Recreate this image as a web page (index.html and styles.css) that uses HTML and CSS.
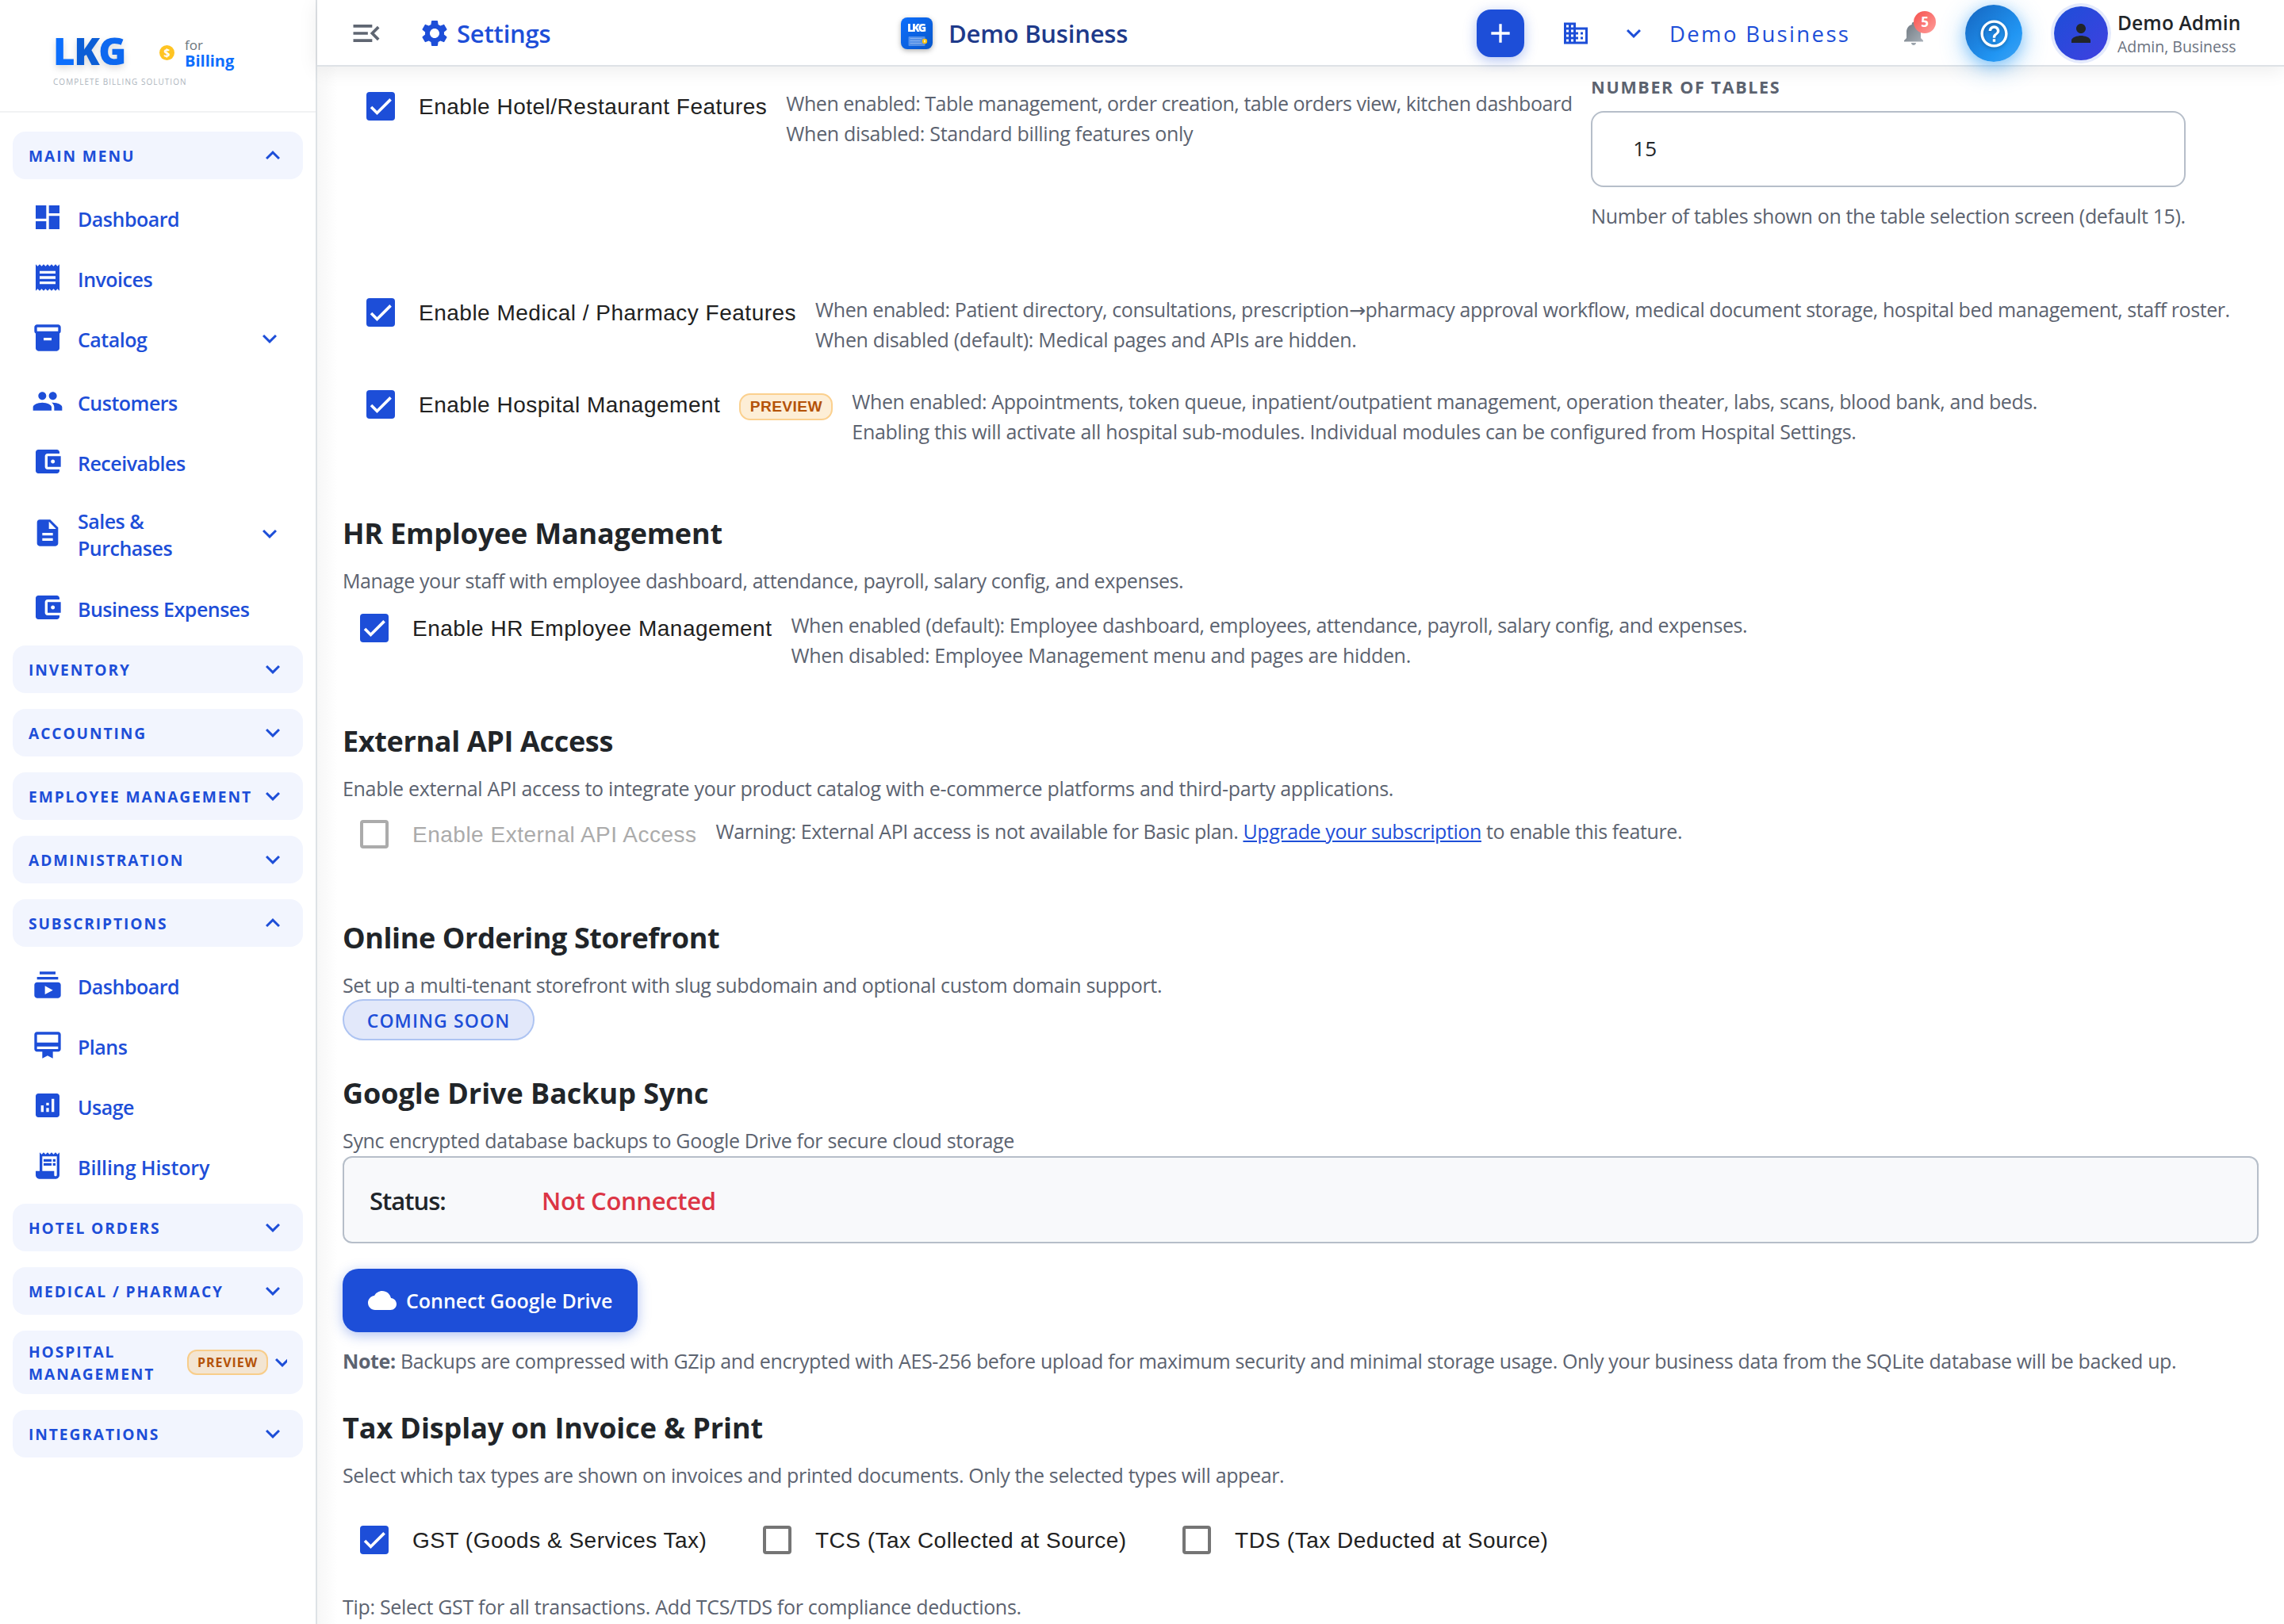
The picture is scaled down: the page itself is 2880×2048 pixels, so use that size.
FILE: index.html
```html
<!DOCTYPE html>
<html lang="en">
<head>
<meta charset="utf-8">
<title>Settings - Demo Business</title>
<link rel="stylesheet" href="styles.css">
</head>
<body>
<svg class="defs" aria-hidden="true">
  <defs>
    <linearGradient id="bellGrad" x1="0" y1="0" x2="1" y2="1"><stop offset="0" stop-color="#6c757d"/><stop offset="1" stop-color="#adb5bd"/></linearGradient>
    <linearGradient id="logoGrad" x1="0" y1="0" x2="1" y2="1"><stop offset="0" stop-color="#0d6efd"/><stop offset="1" stop-color="#0a58ca"/></linearGradient>
    <symbol id="down" viewBox="0 0 24 24"><path d="M16.59 8.59 12 13.17 7.41 8.59 6 10l6 6 6-6z"/></symbol>
    <symbol id="up" viewBox="0 0 24 24"><path d="m12 8-6 6 1.41 1.41L12 10.83l4.59 4.58L18 14z"/></symbol>
    <symbol id="wallet" viewBox="0 0 24 24"><path d="M21 18v1c0 1.1-.9 2-2 2H5c-1.11 0-2-.9-2-2V5c0-1.1.89-2 2-2h14c1.1 0 2 .9 2 2v1h-9c-1.11 0-2 .9-2 2v8c0 1.1.89 2 2 2h9zm-9-2h10V8H12v8zm4-2.500c-.83 0-1.500-.67-1.500-1.500s.67-1.500 1.500-1.500 1.500.67 1.500 1.500-.67 1.500-1.500 1.500z"/></symbol>
    <symbol id="check" viewBox="0 0 24 24"><path d="M1.730 12.910 8.100 19.280 22.790 4.590" fill="none" stroke="#fff" stroke-width="3.120"/></symbol>
  </defs>
</svg>
<div class="app">
  <aside class="sidebar">
    <div class="brand">
      <div class="brand-main">
        <span class="brand-name"><span class="bn-l">L</span><span class="bn-k">K</span><span class="bn-g">G</span></span>
        <span class="coin">$</span>
        <span class="brand-for"><span class="bf-small">for</span><span class="bf-big">Billing</span></span>
      </div>
      <div class="brand-tag">COMPLETE BILLING SOLUTION</div>
    </div>
    <nav class="menu">
      <div class="group"><span>MAIN MENU</span><svg class="chev"><use href="#up"/></svg></div>
      <ul class="items">
        <li class="item"><svg class="ico" viewBox="0 0 24 24"><path d="M3 13h8V3H3v10zm0 8h8v-6H3v6zm10 0h8V11h-8v10zm0-18v6h8V3h-8z"/></svg><span>Dashboard</span></li>
        <li class="item"><svg class="ico" viewBox="0 0 24 24"><path d="M18 17H6v-2h12v2zm0-4H6v-2h12v2zm0-4H6V7h12v2zM3 22l1.500-1.500L6 22l1.500-1.500L9 22l1.500-1.500L12 22l1.500-1.500L15 22l1.500-1.500L18 22l1.500-1.500L21 22V2l-1.500 1.500L18 2l-1.500 1.500L15 2l-1.500 1.500L12 2l-1.500 1.500L9 2 7.500 3.500 6 2 4.500 3.500 3 2v20z"/></svg><span>Invoices</span></li>
        <li class="item parent"><svg class="ico" viewBox="0 0 24 24"><path d="M20 2H4c-1 0-2 .9-2 2v3.010c0 .72.43 1.340 1 1.690V20c0 1.100 1.100 2 2 2h14c.9 0 2-.9 2-2V8.700c.57-.35 1-.97 1-1.690V4c0-1.100-1-2-2-2zm-5 12H9v-2h6v2zm5-7H4V4h16v3z"/></svg><span>Catalog</span><svg class="chev"><use href="#down"/></svg></li>
        <li class="item"><svg class="ico" viewBox="0 0 24 24"><path d="M16 11c1.660 0 2.990-1.340 2.990-3S17.660 5 16 5s-3 1.340-3 3 1.340 3 3 3zm-8 0c1.660 0 2.990-1.340 2.990-3S9.660 5 8 5 5 6.340 5 8s1.340 3 3 3zm0 2c-2.330 0-7 1.170-7 3.500V19h14v-2.500c0-2.330-4.670-3.500-7-3.500zm8 0c-.29 0-.62.020-.97.050 1.160.84 1.970 1.970 1.970 3.450V19h6v-2.500c0-2.330-4.670-3.500-7-3.500z"/></svg><span>Customers</span></li>
        <li class="item"><svg class="ico"><use href="#wallet"/></svg><span>Receivables</span></li>
        <li class="item parent tall"><svg class="ico" viewBox="0 0 24 24"><path d="M14 2H6c-1.100 0-1.990.9-1.990 2L4 20c0 1.100.89 2 1.990 2H18c1.100 0 2-.9 2-2V8l-6-6zm2 16H8v-2h8v2zm0-4H8v-2h8v2zm-3-5V3.500L18.500 9H13z"/></svg><span>Sales &amp;<br>Purchases</span><svg class="chev"><use href="#down"/></svg></li>
        <li class="item"><svg class="ico"><use href="#wallet"/></svg><span>Business Expenses</span></li>
      </ul>
      <div class="group"><span>INVENTORY</span><svg class="chev"><use href="#down"/></svg></div>
      <div class="group"><span>ACCOUNTING</span><svg class="chev"><use href="#down"/></svg></div>
      <div class="group"><span>EMPLOYEE MANAGEMENT</span><svg class="chev"><use href="#down"/></svg></div>
      <div class="group"><span>ADMINISTRATION</span><svg class="chev"><use href="#down"/></svg></div>
      <div class="group"><span>SUBSCRIPTIONS</span><svg class="chev"><use href="#up"/></svg></div>
      <ul class="items">
        <li class="item"><svg class="ico" viewBox="0 0 24 24"><path d="M20 8H4V6h16v2zm-2-6H6v2h12V2zm4 10v8c0 1.100-.9 2-2 2H4c-1.100 0-2-.9-2-2v-8c0-1.100.9-2 2-2h16c1.100 0 2 .9 2 2zm-6 4-6-3.270v6.530L16 16z"/></svg><span>Dashboard</span></li>
        <li class="item"><svg class="ico" viewBox="0 0 24 24"><path d="M20 2H4c-1.110 0-2 .89-2 2v11c0 1.110.89 2 2 2h4v5l4-2 4 2v-5h4c1.110 0 2-.89 2-2V4c0-1.110-.89-2-2-2zm0 13H4v-2h16v2zm0-5H4V4h16v6z"/></svg><span>Plans</span></li>
        <li class="item"><svg class="ico" viewBox="0 0 24 24"><path d="M19 3H5c-1.100 0-2 .9-2 2v14c0 1.100.9 2 2 2h14c1.100 0 2-.9 2-2V5c0-1.100-.9-2-2-2zM9 17H7v-5h2v5zm4 0h-2v-3h2v3zm0-5h-2v-2h2v2zm4 5h-2V7h2v10z"/></svg><span>Usage</span></li>
        <li class="item history"><svg class="ico" viewBox="0 0 24 24"><path d="M19.500 3.500 18 2l-1.500 1.500L15 2l-1.500 1.500L12 2l-1.500 1.500L9 2 7.500 3.500 6 2v14H3v3c0 1.660 1.340 3 3 3h12c1.660 0 3-1.340 3-3V2l-1.500 1.500zM19 19c0 .55-.45 1-1 1s-1-.45-1-1v-3H8V5h11v14z"/><path d="M9 7h6v2H9zM16 7h2v2h-2zM9 10h6v2H9zM16 10h2v2h-2z"/></svg><span>Billing History</span></li>
      </ul>
      <div class="group"><span>HOTEL ORDERS</span><svg class="chev"><use href="#down"/></svg></div>
      <div class="group"><span>MEDICAL / PHARMACY</span><svg class="chev"><use href="#down"/></svg></div>
      <div class="group double"><span>HOSPITAL<br>MANAGEMENT</span><em class="preview-tag">PREVIEW</em><svg class="chev clipped" viewBox="1.330 0 14.670 24"><path d="M16.590 8.590 12 13.170 7.410 8.590 6 10l6 6 6-6z"/></svg></div>
      <div class="group"><span>INTEGRATIONS</span><svg class="chev"><use href="#down"/></svg></div>
    </nav>
  </aside>

  <div class="page">
    <header class="topbar">
      <div class="top-left">
        <svg class="menu-open" viewBox="0 0 24 24"><path d="M3 18h13v-2H3v2zm0-5h10v-2H3v2zm0-7v2h13V6H3zm18 9.590L17.420 12 21 8.410 19.590 7l-5 5 5 5L21 15.590z"/></svg>
        <svg class="gear" viewBox="0 0 24 24"><path d="M19.140 12.940c.04-.3.060-.61.060-.94 0-.32-.02-.64-.07-.94l2.030-1.580c.18-.14.23-.41.12-.61l-1.920-3.320c-.12-.22-.37-.29-.59-.22l-2.390.96c-.5-.38-1.030-.7-1.620-.94l-.36-2.540c-.04-.24-.24-.41-.48-.41h-3.840c-.24 0-.43.17-.47.41l-.36 2.540c-.59.24-1.130.57-1.620.94l-2.390-.96c-.22-.08-.47 0-.59.22L2.740 8.870c-.12.21-.08.47.12.61l2.030 1.580c-.05.3-.09.63-.09.94s.02.64.07.94l-2.030 1.580c-.18.14-.23.41-.12.61l1.920 3.320c.12.22.37.29.59.22l2.390-.96c.5.38 1.030.7 1.620.94l.36 2.540c.05.24.24.41.48.41h3.840c.24 0 .44-.17.47-.41l.36-2.540c.59-.24 1.130-.56 1.620-.94l2.390.96c.22.08.47 0 .59-.22l1.920-3.320c.12-.22.07-.47-.12-.61l-2.010-1.580zM12 15.600c-1.980 0-3.600-1.620-3.600-3.600s1.620-3.600 3.600-3.600 3.600 1.620 3.600 3.600-1.620 3.600-3.600 3.600z"/></svg>
        <span class="title">Settings</span>
      </div>
      <div class="top-brand">
        <svg class="app-logo" viewBox="0 0 40 40"><rect width="40" height="40" rx="8" fill="url(#logoGrad)"/><text x="20" y="17.500" text-anchor="middle" textLength="24" class="app-logo-text">LKG</text><rect x="9.500" y="24" width="21" height="12" rx="1" fill="#fff" fill-opacity=".3"/><path d="M11.500 26.500h15M11.500 29.500h13M11.500 32.500h15" stroke="#fff" stroke-opacity=".3" stroke-width="1"/><circle cx="30" cy="30" r="3.200" fill="#ffc107"/><rect x="29.200" y="28.500" width="1.600" height="3" fill="#fff" fill-opacity=".8"/></svg>
        <span class="title dark">Demo Business</span>
      </div>
      <div class="top-right">
        <span class="add"><svg viewBox="0 0 24 24"><path d="M19 13h-6v6h-2v-6H5v-2h6V5h2v6h6v2z"/></svg></span>
        <svg class="building" viewBox="0 0 24 24"><path d="M12 7V3H2v18h20V7H12zM6 19H4v-2h2v2zm0-4H4v-2h2v2zm0-4H4V9h2v2zm0-4H4V5h2v2zm4 12H8v-2h2v2zm0-4H8v-2h2v2zm0-4H8V9h2v2zm0-4H8V5h2v2zm10 12h-8v-2h2v-2h-2v-2h2v-2h-2V9h8v10zm-2-8h-2v2h2v-2zm0 4h-2v2h2v-2z"/></svg>
        <svg class="chev top-chev"><use href="#down"/></svg>
        <span class="tenant">Demo Business</span>
        <span class="bell"><svg viewBox="0 0 24 24"><path fill="url(#bellGrad)" d="M12 22c1.100 0 2-.9 2-2h-4c0 1.100.89 2 2 2zm6-6v-5c0-3.070-1.640-5.640-4.500-6.320V4c0-.83-.67-1.500-1.500-1.500s-1.500.67-1.500 1.500v.68C7.630 5.360 6 7.920 6 11v5l-2 2v1h16v-1l-2-2z"/></svg><b class="count">5</b></span>
        <span class="help"><svg viewBox="0 0 24 24"><path d="M11 18h2v-2h-2v2zm1-16C6.480 2 2 6.480 2 12s4.480 10 10 10 10-4.480 10-10S17.520 2 12 2zm0 18c-4.410 0-8-3.590-8-8s3.590-8 8-8 8 3.590 8 8-3.590 8-8 8zm0-14c-2.210 0-4 1.790-4 4h2c0-1.100.9-2 2-2s2 .9 2 2c0 2-3 1.750-3 5h2c0-2.250 3-2.500 3-5 0-2.210-1.790-4-4-4z"/></svg></span>
        <span class="avatar"><svg viewBox="0 0 24 24"><path d="M12 12c2.210 0 4-1.790 4-4s-1.790-4-4-4-4 1.790-4 4 1.790 4 4 4zm0 2c-2.670 0-8 1.340-8 4v2h16v-2c0-2.660-5.330-4-8-4z"/></svg></span>
        <span class="who"><span class="who-name">Demo Admin</span><span class="who-role">Admin, Business</span></span>
      </div>
    </header>

    <main class="content">
      <div class="option indent first">
        <span class="box on"><svg><use href="#check"/></svg></span>
        <span class="label">Enable Hotel/Restaurant Features</span>
        <p class="desc">When enabled: Table management, order creation, table orders view, kitchen dashboard<br><span class="alt">When disabled: Standard billing features only</span></p>
        <div class="field">
          <span class="field-label">NUMBER OF TABLES</span>
          <div class="input">15</div>
          <span class="hint">Number of tables shown on the table selection screen (default 15).</span>
        </div>
      </div>
      <div class="option indent medical">
        <span class="box on"><svg><use href="#check"/></svg></span>
        <span class="label">Enable Medical / Pharmacy Features</span>
        <p class="desc">When enabled: Patient directory, consultations, prescription<span class="arrow">→</span>pharmacy approval workflow, medical document storage, hospital bed management, staff roster.<br><span class="alt">When disabled (default): Medical pages and APIs are hidden.</span></p>
      </div>
      <div class="option indent hospital">
        <span class="box on"><svg><use href="#check"/></svg></span>
        <span class="label">Enable Hospital Management</span>
        <em class="preview-badge">PREVIEW</em>
        <p class="desc">When enabled: Appointments, token queue, inpatient/outpatient management, operation theater, labs, scans, blood bank, and beds.<br><span class="alt">Enabling this will activate all hospital sub-modules. Individual modules can be configured from Hospital Settings.</span></p>
      </div>

      <section class="block hr">
        <h2>HR Employee Management</h2>
        <p class="lead">Manage your staff with employee dashboard, attendance, payroll, salary config, and expenses.</p>
        <div class="option">
          <span class="box on"><svg><use href="#check"/></svg></span>
          <span class="label">Enable HR Employee Management</span>
          <p class="desc">When enabled (default): Employee dashboard, employees, attendance, payroll, salary config, and expenses.<br><span class="alt">When disabled: Employee Management menu and pages are hidden.</span></p>
        </div>
      </section>

      <section class="block api">
        <h2>External API Access</h2>
        <p class="lead">Enable external API access to integrate your product catalog with e-commerce platforms and third-party applications.</p>
        <div class="option">
          <span class="box off disabled"></span>
          <span class="label disabled">Enable External API Access</span>
          <p class="desc">Warning: External API access is not available for Basic plan. <a>Upgrade your subscription</a> to enable this feature.</p>
        </div>
      </section>

      <section class="block store">
        <h2>Online Ordering Storefront</h2>
        <p class="lead">Set up a multi-tenant storefront with slug subdomain and optional custom domain support.</p>
        <span class="pill">COMING SOON</span>
      </section>

      <section class="block drive">
        <h2>Google Drive Backup Sync</h2>
        <p class="lead">Sync encrypted database backups to Google Drive for secure cloud storage</p>
        <div class="status"><span class="status-key">Status:</span><span class="status-value">Not Connected</span></div>
        <div class="connect"><svg viewBox="0 0 24 24"><path d="M19.350 10.040C18.670 6.590 15.640 4 12 4 9.110 4 6.600 5.640 5.350 8.040 2.340 8.360 0 10.910 0 14c0 3.310 2.690 6 6 6h13c2.760 0 5-2.240 5-5 0-2.640-2.050-4.780-4.650-4.960z"/></svg><span>Connect Google Drive</span></div>
        <p class="lead note"><b>Note:</b> Backups are compressed with GZip and encrypted with AES-256 before upload for maximum security and minimal storage usage. Only your business data from the SQLite database will be backed up.</p>
      </section>

      <section class="block tax">
        <h2>Tax Display on Invoice &amp; Print</h2>
        <p class="lead">Select which tax types are shown on invoices and printed documents. Only the selected types will appear.</p>
        <div class="tax-row">
          <div class="tax-opt"><span class="box on"><svg><use href="#check"/></svg></span><span class="label">GST (Goods &amp; Services Tax)</span></div>
          <div class="tax-opt"><span class="box off"></span><span class="label">TCS (Tax Collected at Source)</span></div>
          <div class="tax-opt"><span class="box off"></span><span class="label">TDS (Tax Deducted at Source)</span></div>
        </div>
        <p class="lead tip">Tip: Select GST for all transactions. Add TCS/TDS for compliance deductions.</p>
      </section>
    </main>
  </div>
</div>
</body>
</html>
```
FILE: styles.css
```css
* { box-sizing: border-box; }
html, body { margin: 0; padding: 0; }
body {
  width: 2880px; height: 2048px; overflow: hidden; background: #fff;
  font-family: "Open Sans", "Noto Sans", sans-serif;
  color: #212529; font-size: 25.6px;
}
p, h2, ul { margin: 0; padding: 0; }
ul { list-style: none; }
em { font-style: normal; }
svg { display: block; flex: none; }
.defs { position: absolute; width: 0; height: 0; }
.app { display: flex; height: 2048px; }

/* Sidebar */
.sidebar { width: 400px; flex: none; border-right: 2px solid #dee2e6; background: #fff; }
.brand { height: 142px; border-bottom: 2px solid #f1f2f3; padding: 40px 0 0 67px; }
.brand-main { display: flex; align-items: center; height: 52px; }
.brand-name { font-weight: 800; font-size: 47.5px; line-height: 52px; width: 90px; letter-spacing: -1.5px; display: flex; margin-top: -4px; filter: drop-shadow(0 4px 4px rgba(0,0,0,.15)); }
.bn-l { color: #0d6ffd; }
.bn-k { color: #0c5ed6; }
.bn-g { color: #0d68f0; }
.coin { width: 19px; height: 19px; border-radius: 50%; background: #ffc422; color: #fff; font-weight: 700; font-size: 14px; line-height: 19px; text-align: center; margin: 0 0 0 44px; }
.brand-for { display: flex; flex-direction: column; margin: 2px 0 0 13px; }
.bf-small { font-size: 17px; line-height: 20px; color: #6c757d; font-weight: 500; }
.bf-big { font-size: 20px; line-height: 20px; color: #0d6efd; font-weight: 700; }
.brand-tag { font-size: 10px; line-height: 14px; letter-spacing: 1.03px; color: #adb5bd; margin-top: 4px; white-space: nowrap; }

.menu { padding: 24px 16px 0; display: flex; flex-direction: column; }
.group { height: 60px; border-radius: 16px; background: #f2f5fe; display: flex; align-items: center; justify-content: space-between; padding: 0 20px; margin-bottom: 20px; color: #1d4ed8; font-weight: 700; font-size: 19.2px; letter-spacing: 1.9px; line-height: 28px; white-space: nowrap; }
.group > span { padding-top: 1px; }
.group + .items { margin-top: -8px; padding-bottom: 8px; }
.group.double { height: 80px; }
.chev { width: 36px; height: 36px; fill: #1d4ed8; }
.double span { width: 200px; }
.preview-tag { width: 102px; height: 32px; border: 2px solid #f8cd8a; border-radius: 12px; background: #f3e5d2; color: #b45309; font-size: 16px; letter-spacing: .9px; line-height: 28px; text-align: center; font-weight: 700; }
.chev.clipped { width: 22px; margin-left: 2px; }
.item { height: 76px; display: flex; align-items: center; padding-left: 24px; color: #1d4ed8; font-weight: 600; font-size: 25px; letter-spacing: -.5px; line-height: 34px; white-space: nowrap; }
.item .ico { width: 40px; height: 40px; fill: #1d4ed8; margin: -4px 18px 0 0; }
.item.parent { margin-bottom: 4px; padding-right: 24px; }
.item.parent .chev { margin: -3px 0 0 auto; }
.item.tall { height: 104px; }
.item.history { letter-spacing: -.1px; }

/* Top bar */
.page { flex: 1; min-width: 0; display: flex; flex-direction: column; }
.topbar { height: 84px; flex: none; padding-top: 2px; border-bottom: 2px solid #dee2e6; background: #fff; display: flex; align-items: center; box-shadow: 0 4px 24px rgba(0,0,0,.08); position: relative; }
.top-left { width: 735px; display: flex; align-items: center; padding-left: 40px; }
.menu-open { width: 44px; height: 44px; fill: #5f6672; margin-right: 44px; }
.gear { width: 40px; height: 40px; fill: #1d4ed8; margin-right: 8px; }
.title { font-size: 31px; font-weight: 600; letter-spacing: -.2px; line-height: 44px; color: #1d4ed8; white-space: nowrap; }
.title.dark { color: #1e3a8a; }
.top-brand { display: flex; align-items: center; gap: 20px; width: 726px; }
.app-logo { width: 40px; height: 40px; filter: drop-shadow(0 2px 3px rgba(0,0,0,.3)); margin-left: 1px; }
.app-logo-text { font: 800 14px "Open Sans", sans-serif; fill: #fff; }
.top-right { display: flex; align-items: center; }
.add { width: 60px; height: 60px; border-radius: 18px; background: #1d4ed8; display: flex; align-items: center; justify-content: center; box-shadow: 0 4px 16px rgba(29,78,216,.35); margin-left: 1px; }
.add svg { width: 40px; height: 40px; fill: #fff; }
.building { width: 36px; height: 36px; fill: #1d4ed8; margin-left: 47px; }
.top-chev { margin-left: 37px; }
.tenant { width: 290px; margin-left: 27px; font-size: 27.5px; letter-spacing: 2.35px; font-weight: 500; color: #1d4ed8; white-space: nowrap; }
.bell { position: relative; width: 36px; height: 36px; }
.bell svg { width: 36px; height: 36px; }
.count { position: absolute; left: 18px; top: -10px; width: 28px; height: 28px; border-radius: 50%; background: linear-gradient(135deg, #f5504c, #ff9f9c); color: #fff; font-size: 17px; line-height: 28px; text-align: center; }
.help { width: 72px; height: 72px; border-radius: 50%; margin-left: 47px; background: linear-gradient(135deg, #1565c0, #2196f3 70%, #42a5f5); display: flex; align-items: center; justify-content: center; box-shadow: 0 8px 32px rgba(33,150,243,.45), 0 4px 16px rgba(33,150,243,.3); }
.help svg { width: 41px; height: 41px; fill: #fff; filter: drop-shadow(0 2px 2px rgba(0,0,0,.25)); }
.avatar { width: 68px; height: 68px; border-radius: 50%; margin-left: 40px; background: linear-gradient(135deg, #1d4ed8, #4040e0); box-shadow: 0 0 0 4px #e4eafc; display: flex; align-items: center; justify-content: center; }
.avatar svg { width: 36px; height: 36px; fill: #212529; }
.who { display: flex; flex-direction: column; margin-left: 12px; padding-top: 2px; white-space: nowrap; }
.who-name { font-size: 24.5px; line-height: 32px; font-weight: 600; letter-spacing: .15px; }
.who-role { font-size: 19.5px; line-height: 28px; color: #6c7380; }

/* Content */
.content { flex: 1; padding: 28px 32px 0; background: linear-gradient(90deg, #f7f7f7, #fff 26px); }
.option { display: flex; align-items: flex-start; padding-left: 22px; }
.option.indent { padding-left: 30px; }
.box { width: 36px; height: 36px; border-radius: 4px; flex: none; margin: 4px 30px 0 0; }
.box.on { background: #1d4ed8; padding: 4px; }
.box.on svg { width: 28px; height: 28px; }
.box.off { border: 4px solid #757575; }
.box.off.disabled { border-color: #ababab; }
.label { font-family: "Liberation Sans", Arial, sans-serif; font-size: 28px; letter-spacing: .5px; line-height: 42px; padding-top: 2px; color: #212121; white-space: nowrap; flex: none; }
.label.disabled { color: #ababab; }
.desc { margin: -1px 0 1px 24px; font-size: 25px; letter-spacing: -.4px; line-height: 38px; color: #5c6370; white-space: nowrap; }
.desc a { color: #1d4ed8; text-decoration: underline; }
.desc .alt { letter-spacing: -.32px; }
.arrow { font-family: "DejaVu Sans", sans-serif; line-height: 20px; }
.first { height: 180px; }
.first .desc { width: 991px; letter-spacing: -.47px; }
.field { margin: -14px 0 0 24px; width: 750px; display: flex; flex-direction: column; }
.field-label { font-size: 21.5px; line-height: 24px; font-weight: 700; letter-spacing: 1.65px; color: #5c6370; }
.input { height: 96px; margin: 18px 0; border: 2px solid #b6bec9; border-radius: 16px; padding-left: 51px; font-size: 26px; line-height: 90px; color: #212529; background: #fff; }
.hint { font-size: 25px; letter-spacing: -.36px; line-height: 38px; margin-top: -1px; color: #5c6370; white-space: nowrap; }
.medical { margin-top: 80px; }
.medical .desc { letter-spacing: -.42px; }
.hospital { margin-top: 40px; }
.preview-badge { width: 118px; height: 34px; border: 2px solid #fbd08e; border-radius: 14px; background: #fdeed6; color: #b45309; font: 700 19.2px/30px "Liberation Sans", Arial, sans-serif; letter-spacing: .4px; text-align: center; margin: 8px 0 0 24px; flex: none; }

.block h2 { font-size: 36px; letter-spacing: -.2px; line-height: 48px; font-weight: 700; white-space: nowrap; }
.lead { font-size: 25px; letter-spacing: -.36px; line-height: 36px; color: #5c6370; margin-top: 17px; padding-bottom: 1px; white-space: nowrap; }
.hr { margin-top: 85px; }
.hr .lead { letter-spacing: -.4px; }
.hr .option { margin-top: 19px; }
.api { margin-top: 65px; }
.api h2 { letter-spacing: -.35px; }
.api .lead { letter-spacing: -.32px; }
.api .option { margin-top: 17px; }
.store { margin-top: 85px; }
.store h2 { letter-spacing: -.4px; }
.pill { display: flex; align-items: center; justify-content: center; width: 242px; height: 52px; padding-top: 1px; margin-top: -1px; border: 2px solid #aec4f2; border-radius: 26px; background: #e2e8fa; color: #1d4ed8; font-size: 23px; font-weight: 600; letter-spacing: 1.1px; position: relative; }
.drive { margin-top: 43px; }
.drive h2 { letter-spacing: -.05px; }
.drive .lead { letter-spacing: -.32px; }
.status { display: flex; align-items: center; height: 110px; padding-top: 2px; margin-top: 1px; border: 2px solid #b6bec9; border-radius: 12px; background: #f8f9fb; padding-left: 32px; font-size: 31px; font-weight: 600; }
.status-key { width: 217px; letter-spacing: -1px; }
.status-value { color: #dc3545; letter-spacing: -.35px; }
.connect { display: flex; align-items: center; width: 372px; height: 80px; margin-top: 32px; padding-left: 32px; gap: 12px; border-radius: 20px; background: #1d4ed8; color: #fff; font-size: 25px; font-weight: 600; white-space: nowrap; box-shadow: 0 4px 16px rgba(29,78,216,.35); }
.connect svg { width: 36px; height: 36px; fill: #fff; }
.drive .note { margin-top: 18px; letter-spacing: -.36px; }
.tax { margin-top: 42px; }
.tax h2 { letter-spacing: -.1px; }
.tax-row { display: flex; gap: 70.5px; padding-left: 22px; margin-top: 41px; }
.tax-opt { display: flex; }
.tax .tip { margin-top: 44px; letter-spacing: -.31px; }
```
